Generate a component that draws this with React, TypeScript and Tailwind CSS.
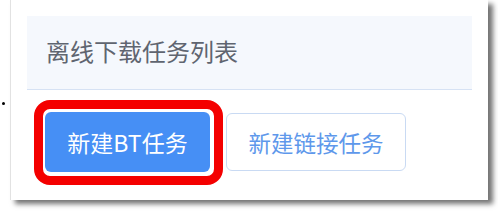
import React from "react";

const App: React.FC = () => {
  return (
    <div
      className="relative w-[498px] h-[215px] bg-white overflow-hidden"
      style={{ fontFamily: '"Noto Sans CJK SC", "Noto Sans", sans-serif' }}
    >
      {/* stray dot at left */}
      <div className="absolute left-[2px] top-[102px] w-[3px] h-[3px] rounded-full bg-black" />

      <div className="ml-[10px] w-[478px] h-[200px] bg-white border-l border-[#e2e2e2] shadow-[5px_4px_5px_rgba(0,0,0,0.55)] pt-[16px] px-[16px]">
        {/* header */}
        <div className="h-[74px] bg-[#f5f8fd] border-b border-[#d6e2f4] pl-[19px] pb-[4px] flex items-center">
          <span className="text-[24px] leading-none text-[#5f6570]">离线下载任务列表</span>
        </div>

        {/* actions */}
        <div className="mt-[22px] pl-[18px] flex items-center gap-[16px]">
          <div className="relative">
            <button className="w-[165px] h-[60px] rounded-[6px] bg-[#468ff5] text-white text-[23px] leading-none flex items-center justify-center">
              新建BT任务
            </button>
            <div className="absolute left-[-11px] top-[-12px] right-[-13px] bottom-[-13px] border-[9px] border-[#f40000] rounded-[16px] pointer-events-none" />
          </div>
          <button className="w-[180px] h-[58px] rounded-[6px] bg-white border border-[#c9daf3] text-[#5e98eb] text-[22.5px] leading-none flex items-center justify-center">
            新建链接任务
          </button>
        </div>
      </div>
    </div>
  );
};

export default App;
